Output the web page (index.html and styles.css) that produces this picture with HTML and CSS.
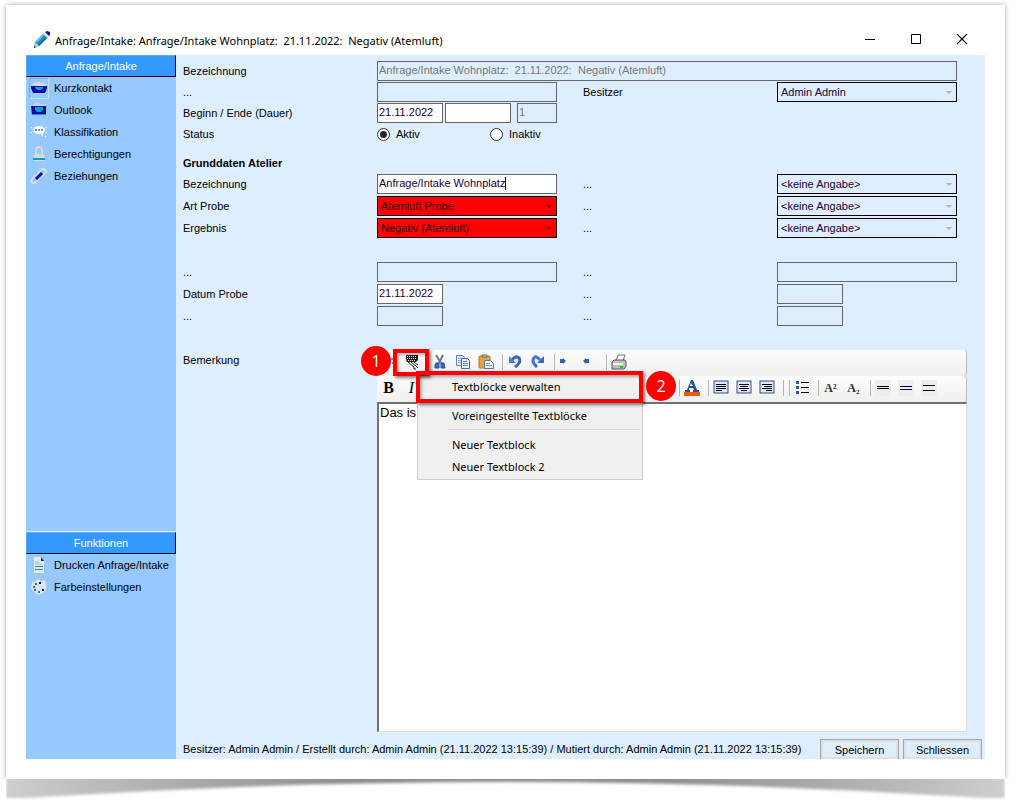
FILE: index.html
```html
<!DOCTYPE html>
<html lang="de">
<head>
    <meta charset="UTF-8">
    <meta name="viewport" content="width=device-width, initial-scale=1.0">
    <title>Anfrage/Intake</title>
    <link rel="stylesheet" href="styles.css">
</head>
<body>

    <div class="window">
        <header class="titlebar">
            <svg class="title-icon" width="18" height="18" viewBox="0 0 18 18">
                <path d="M2 11 L11 2 L15 6 L6 15 L1 17 Z" fill="#1b8fc4"/>
                <path d="M3 10 L11 2 L12 3 L4 12 Z" fill="#5cc3e8"/>
                <path d="M5 14 L14 5 L15 6 L6 15 Z" fill="#0b6396"/>
                <path d="M10 3 L12 1 L16 5 L14 7 Z" fill="#d8e4ea"/>
                <path d="M12 1 L14 0 L17 1 L17 4 L16 5 Z" fill="#1414a0"/>
                <path d="M2 11 L6 15 L1 17 Z" fill="#b9cdd6"/>
                <path d="M1 15 L3 16 L1 17 Z" fill="#223"/>
            </svg>
            <h1>Anfrage/Intake: Anfrage/Intake Wohnplatz:&nbsp; 21.11.2022:&nbsp; Negativ (Atemluft)</h1>
            <div class="window-buttons">
                <button type="button" aria-label="Minimieren"><svg width="12" height="12" viewBox="0 0 12 12"><path d="M1 5.500H11" stroke="#000"/></svg></button>
                <button type="button" aria-label="Maximieren"><svg width="12" height="12" viewBox="0 0 12 12"><path d="M1.500 0.500H10.500V9.500H1.500Z" fill="none" stroke="#000"/></svg></button>
                <button type="button" aria-label="Fenster schliessen"><svg width="12" height="12" viewBox="0 0 12 12"><path d="M1 0L11 10M11 0L1 10" stroke="#000" stroke-width="1.200"/></svg></button>
            </div>
        </header>

        <div class="content">
            <aside class="sidebar">
                <nav class="group">
                    <h2>Anfrage/Intake</h2>
                    <a href="#" class="item active">
                        <span class="icon"><svg width="18" height="16" viewBox="0 0 18 16"><path d="M3 4L5 2H9L10 3H14L16 5V8H2V5Z" fill="#d5d9dc"/><path d="M1 6H17V8L15 13H3L1 8Z" fill="#0909a8"/><path d="M5 7H13V8L11 10H7L5 8Z" fill="#0b9bd0"/></svg></span>
                        Kurzkontakt
                    </a>
                    <a href="#" class="item">
                        <span class="icon"><svg width="18" height="16" viewBox="0 0 18 16"><path d="M3 3L5 1H9L10 2H14L16 4V7H2V4Z" fill="#c5d5e0"/><path d="M1 4H16V13H2Z" fill="#0909a8"/><path d="M5 5H13V8L11 10H7L5 8Z" fill="#0b9bd0"/><path d="M2 12H16V13H2Z" fill="#0b9bd0"/></svg></span>
                        Outlook
                    </a>
                    <a href="#" class="item">
                        <span class="icon"><svg width="18" height="16" viewBox="0 0 18 16"><ellipse cx="9" cy="6" rx="6" ry="4" fill="#fff"/><path d="M10 9L13 13V8Z" fill="#fff"/><path d="M5 5h2v2h-2zM8 5h2v2h-2zM11 5h2v2h-2z" fill="#69a0c4"/><path d="M1 3h1v1h-1zM1 8h1v1h-1zM16 3h1v1h-1zM16 8h1v1h-1zM15 12h1v1h-1z" fill="#fff"/></svg></span>
                        Klassifikation
                    </a>
                    <a href="#" class="item">
                        <span class="icon"><svg width="18" height="16" viewBox="0 0 18 16"><path d="M6 8V4Q6 1 9 1T12 4V8" fill="none" stroke="#d5d9dc" stroke-width="2"/><path d="M4 8H14L15 15H3Z" fill="#d5d9dc"/><path d="M3 12H15V14H3Z" fill="#0b9bc8"/></svg></span>
                        Berechtigungen
                    </a>
                    <a href="#" class="item">
                        <span class="icon"><svg width="18" height="16" viewBox="0 0 18 16"><g fill="none" stroke="#d8dde2" stroke-width="2"><rect x="8" y="2" width="8" height="5" rx="2" transform="rotate(-45 12 4.500)"/><rect x="1" y="9" width="8" height="5" rx="2" transform="rotate(-45 5 11.500)"/></g><path d="M6 11L12 5" stroke="#0909b8" stroke-width="3"/></svg></span>
                        Beziehungen
                    </a>
                </nav>
                <nav class="group functions">
                    <h2>Funktionen</h2>
                    <a href="#" class="item">
                        <span class="icon"><svg width="18" height="16" viewBox="0 0 18 16"><path d="M4 0H11L14 4V16H4Z" fill="#e8eaec"/><path d="M11 0L14 4H11Z" fill="#0909a8"/><path d="M5 5H9M5 7H12" stroke="#8ebbd8"/><path d="M5 9.500H13M5 12.500H13" stroke="#1690bd"/></svg></span>
                        Drucken Anfrage/Intake
                    </a>
                    <a href="#" class="item">
                        <span class="icon"><svg width="18" height="16" viewBox="0 0 18 16"><path d="M5 2L9 0L11 3L13 1L16 3V11L13 14L8 16L4 13L1 9L2 4Z" fill="#dfe5ea"/><path d="M5 4h2v2h-2zM3 7h2v2h-2zM4 10h2v2h-2zM8 12h2v2h-2z" fill="#107fae"/><path d="M9 3h2v2h-2zM12 10h2v2h-2z" fill="#0909a8"/></svg></span>
                        Farbeinstellungen
                    </a>
                </nav>
            </aside>

            <main class="main">
                <form class="form">
                    <div class="fields head-fields">
                        <label for="title">Bezeichnung</label>
                        <input class="wide" type="text" id="title" value="Anfrage/Intake Wohnplatz:  21.11.2022:  Negativ (Atemluft)" disabled>

                        <label for="extra">...</label>
                        <input type="text" id="extra" disabled>
                        <label class="second" for="owner">Besitzer</label>
                        <div class="select"><select id="owner"><option>Admin Admin</option></select></div>

                        <label for="begin">Beginn / Ende (Dauer)</label>
                        <div class="dates">
                            <input type="text" id="begin" value="21.11.2022">
                            <input type="text" aria-label="Ende">
                            <input class="duration" type="text" aria-label="Dauer" value="1" disabled>
                        </div>

                        <span class="row-start">Status</span>
                        <div class="radios">
                            <label><input type="radio" name="status" checked> Aktiv</label>
                            <label><input type="radio" name="status"> Inaktiv</label>
                        </div>
                    </div>

                    <h3>Grunddaten Atelier</h3>

                    <div class="fields base-fields">
                        <label for="name">Bezeichnung</label>
                        <div class="typing"><input type="text" id="name" value="Anfrage/Intake Wohnplatz"></div>
                        <label class="second" for="opt1">...</label>
                        <div class="select"><select id="opt1"><option>&lt;keine Angabe&gt;</option></select></div>

                        <label for="kind">Art Probe</label>
                        <div class="select required"><select id="kind"><option>Atemluft Probe</option></select></div>
                        <label class="second" for="opt2">...</label>
                        <div class="select"><select id="opt2"><option>&lt;keine Angabe&gt;</option></select></div>

                        <label for="result">Ergebnis</label>
                        <div class="select required"><select id="result"><option>Negativ (Atemluft)</option></select></div>
                        <label class="second" for="opt3">...</label>
                        <div class="select"><select id="opt3"><option>&lt;keine Angabe&gt;</option></select></div>

                        <div class="spacer"></div>

                        <label for="free1">...</label>
                        <input type="text" id="free1" disabled>
                        <label class="second" for="free2">...</label>
                        <input type="text" id="free2" disabled>

                        <label for="date">Datum Probe</label>
                        <input class="short" type="text" id="date" value="21.11.2022">
                        <label class="second" for="free3">...</label>
                        <input class="short" type="text" id="free3" disabled>

                        <label for="free4">...</label>
                        <input class="short" type="text" id="free4" disabled>
                        <label class="second" for="free5">...</label>
                        <input class="short" type="text" id="free5" disabled>
                    </div>

                    <div class="remark">
                        <label for="remark">Bemerkung</label>
                        <div class="editor">
                            <div class="toolbar toolbar-top">
                                <button type="button" aria-label="Einfügen"><svg width="16" height="16" viewBox="0 0 16 16"><path d="M10 5H13M11 9H13" stroke="#222"/></svg></button>
                                <button type="button" aria-label="Textblöcke"><svg width="16" height="16" viewBox="0 0 16 16"><path d="M2 1H14V6L12 8H3L2 6Z" fill="#222"/><path d="M3 2.500H13M3 4.500H13M4 6.500H12" stroke="#f2f0b0" stroke-dasharray="1 1"/><path d="M4 8L10 13M7 8L12 12M10 8L14 11M10 13V15H12M12 12L14 14" stroke="#222" fill="none"/></svg></button>
                                <span class="sep hidden"></span>
                                <button type="button" aria-label="Ausschneiden"><svg width="16" height="16" viewBox="0 0 16 16"><path d="M4 1L9 9M11 1L7 9" stroke="#68788c" stroke-width="2"/><path d="M4 9H7V14H3V11ZM9 9H12L13 14H9Z" fill="#3e69bd" stroke="#2c4c94"/></svg></button>
                                <button type="button" aria-label="Kopieren"><svg width="16" height="16" viewBox="0 0 16 16"><path d="M1.500 1.500H7.500L9.500 3.500V11.500H1.500Z" fill="#eaf2ff" stroke="#5a82c8"/><path d="M3 4.500H7M3 6.500H7M3 8.500H7" stroke="#7da2dd"/><path d="M6.500 4.500H12.500L14.500 6.500V14.500H6.500Z" fill="#eaf2ff" stroke="#4069b5"/><path d="M8 7.500H12M8 9.500H13M8 11.500H13" stroke="#5a82c8"/></svg></button>
                                <button type="button" aria-label="Einsetzen"><svg width="16" height="16" viewBox="0 0 16 16"><rect x="1" y="2" width="11" height="12" rx="1" fill="#e2a53c" stroke="#a87722"/><path d="M4 3V1H9V3Z" fill="#ddd" stroke="#665"/><path d="M6.500 6.500H12.500L15.500 9.500V14.500H6.500Z" fill="#eef4ff" stroke="#5876a8"/><path d="M8 9.500H12M8 11.500H14" stroke="#7899cc"/></svg></button>
                                <span class="sep"></span>
                                <button type="button" aria-label="Rückgängig"><svg width="16" height="16" viewBox="0 0 16 16"><path d="M5 6Q9 1 12 4Q15 8 8 13" fill="none" stroke="#3565bd" stroke-width="3"/><path d="M2 2V9H9Z" fill="#4c82d8"/></svg></button>
                                <button type="button" aria-label="Wiederholen"><svg width="16" height="16" viewBox="0 0 16 16"><path d="M10 6Q6 1 4 4Q1 8 7 13" fill="none" stroke="#3f76d0" stroke-width="3"/><path d="M14 2V9H7Z" fill="#3569c4"/></svg></button>
                                <span class="sep"></span>
                                <button type="button" aria-label="Einzug vergrössern"><svg width="16" height="16" viewBox="0 0 16 16"><path d="M1 5H4V4L7 7L4 10V9H1Z" fill="#2c62ba"/></svg></button>
                                <button type="button" aria-label="Einzug verkleinern"><svg width="16" height="16" viewBox="0 0 16 16"><path d="M7 5H4V4L1 7L4 10V9H7Z" fill="#2c62ba"/></svg></button>
                                <span class="sep"></span>
                                <button type="button" aria-label="Drucken"><svg width="16" height="16" viewBox="0 0 16 16"><path d="M5 7L7 1H14L12 7Z" fill="#fff" stroke="#777"/><path d="M1 8L3 6H14L15 8V12L13 15H1Z" fill="#bbc0c3" stroke="#555"/><path d="M2 9H12V11H2Z" fill="#f4f4f4"/><path d="M9 12h3v2h-3z" fill="#22c322"/></svg></button>
                            </div>
                            <div class="toolbar">
                                <button class="serif bold" type="button">B</button>
                                <button class="serif italic" type="button">I</button>
                                <span class="covered"></span>
                                <span class="sep"></span>
                                <button type="button" aria-label="Schriftfarbe"><svg width="16" height="16" viewBox="0 0 16 16"><path d="M7 0H9L13 10H15V12H9V10H10L9 8H5L5 10H6V12H1V10H3ZM7 3L6 6H9Z" fill="#2c4f94"/><path d="M0 12H16V16H0Z" fill="#ff5500"/></svg></button>
                                <span class="sep"></span>
                                <button type="button" aria-label="Linksbündig"><svg width="16" height="16" viewBox="0 0 16 16"><rect class="page" x="1" y="1" width="14" height="12"/><path d="M3 4.500H13M3 6.500H13M3 8.500H13M3 10.500H9" stroke="#000"/></svg></button>
                                <button type="button" aria-label="Zentriert"><svg width="16" height="16" viewBox="0 0 16 16"><rect class="page" x="1" y="1" width="14" height="12"/><path d="M3 4.500H13M4 6.500H12M3 8.500H13M5 10.500H11" stroke="#000"/></svg></button>
                                <button type="button" aria-label="Rechtsbündig"><svg width="16" height="16" viewBox="0 0 16 16"><rect class="page" x="1" y="1" width="14" height="12"/><path d="M3 4.500H13M5 6.500H13M3 8.500H13M7 10.500H13" stroke="#000"/></svg></button>
                                <span class="sep"></span>
                                <span class="sep"></span>
                                <button type="button" aria-label="Aufzählung"><svg width="16" height="16" viewBox="0 0 16 16"><path d="M2 1h3v3h-3zM2 6h3v3h-3zM2 11h3v3h-3z" fill="#3455a0"/><path d="M7 2.500H15M7 7.500H15M7 12.500H15" stroke="#000"/></svg></button>
                                <span class="sep"></span>
                                <button class="serif script" type="button">A²</button>
                                <button class="serif script" type="button">A₂</button>
                                <span class="sep"></span>
                                <button type="button" aria-label="Zeilenabstand klein"><svg width="16" height="16" viewBox="0 0 16 16"><rect width="16" height="16" fill="#eee"/><path d="M2 6.500H14M2 8.500H14" stroke="#000"/></svg></button>
                                <button type="button" aria-label="Zeilenabstand mittel"><svg width="16" height="16" viewBox="0 0 16 16"><rect width="16" height="16" fill="#eee"/><path d="M2 6.500H14" stroke="#000"/><path d="M2 9.500H14" stroke="#000080"/></svg></button>
                                <button type="button" aria-label="Zeilenabstand gross"><svg width="16" height="16" viewBox="0 0 16 16"><rect width="16" height="16" fill="#eee"/><path d="M2 5.500H14M2 10.500H14" stroke="#000"/></svg></button>
                            </div>
                            <textarea id="remark">Das is</textarea>

                            <div class="menu">
                                <button type="button">Textblöcke verwalten</button>
                                <hr>
                                <button type="button">Voreingestellte Textblöcke</button>
                                <hr>
                                <button type="button">Neuer Textblock</button>
                                <button type="button">Neuer Textblock 2</button>
                            </div>
                            <div class="mark mark-tool"></div>
                            <div class="mark mark-menu"></div>
                            <span class="step step-one">1</span>
                            <span class="step step-two">2</span>
                        </div>
                    </div>

                    <footer class="footer">
                        <span>Besitzer: Admin Admin / Erstellt durch: Admin Admin (21.11.2022 13:15:39) / Mutiert durch: Admin Admin (21.11.2022 13:15:39)</span>
                        <div class="actions">
                            <button type="button">Speichern</button>
                            <button type="button">Schliessen</button>
                        </div>
                    </footer>
                </form>
            </main>
        </div>
    </div>

    <svg class="page-shadow" viewBox="0 0 1000 24" preserveAspectRatio="none">
        <defs>
            <linearGradient id="shade">
                <stop offset="0" stop-color="#cfcfcf"/>
                <stop offset="0.080" stop-color="#bdbdbd"/>
                <stop offset="0.350" stop-color="#8c8c8c"/>
                <stop offset="0.650" stop-color="#8c8c8c"/>
                <stop offset="0.920" stop-color="#bdbdbd"/>
                <stop offset="1" stop-color="#cfcfcf"/>
            </linearGradient>
            <filter id="soft" x="-5%" y="-50%" width="110%" height="200%"><feGaussianBlur stdDeviation="1.500"/></filter>
        </defs>
        <path d="M0 -6H1000V19H980Q740 3 500 3T20 19H0Z" fill="url(#shade)" filter="url(#soft)"/>
    </svg>

</body>
</html>
```
FILE: styles.css
```css
* {
    margin: 0;
    padding: 0;
    box-sizing: border-box;
}

body {
    font-family: 'Liberation Sans', Arial, sans-serif;
    font-size: 11px;
    color: #000;
    background: #fff;
    display: flex;
    flex-direction: column;
    min-height: 100vh;
    padding: 5px 14px 5px 6px;
}

button, input, select, textarea {
    font: inherit;
    color: inherit;
    border-radius: 0;
    outline: none;
}

button {
    background: none;
    border: none;
}

.window {
    position: relative;
    z-index: 1;
    flex: 1;
    display: flex;
    flex-direction: column;
    padding: 20px;
    background: #fff;
    box-shadow: 0 0 5px rgba(0, 0, 0, 0.35);
    clip-path: inset(-5px -5px 0 -5px);
}

.page-shadow {
    display: block;
    width: 100%;
    height: 24px;
}

/* Title bar */

.titlebar {
    display: flex;
    align-items: center;
    height: 30px;
    padding-left: 7px;
}

.titlebar h1 {
    flex: 1;
    margin-left: 4px;
    font-family: 'Noto Sans', 'Open Sans', sans-serif;
    font-size: 11px;
    font-weight: 400;
}

.window-buttons {
    display: flex;
}

.window-buttons button {
    display: flex;
    align-items: center;
    justify-content: center;
    width: 46px;
    height: 30px;
}

/* Sidebar */

.content {
    flex: 1;
    display: flex;
    background: #deeeff;
}

.sidebar {
    width: 150px;
    display: flex;
    flex-direction: column;
    justify-content: space-between;
    background: #95c9ff;
}

.functions {
    min-height: 228px;
    border-top: 1px solid #deeeff;
}

.group h2 {
    height: 22px;
    border: 1px solid #5cabff;
    border-right-color: #000;
    border-bottom-color: #000;
    background: #3399ff;
    color: #fff;
    font-size: 11px;
    font-weight: 400;
    line-height: 20px;
    text-align: center;
}

.item {
    display: flex;
    align-items: center;
    gap: 5px;
    height: 22px;
    padding-left: 3px;
    color: #000;
    text-decoration: none;
    white-space: nowrap;
}

.icon {
    display: flex;
    align-items: center;
    justify-content: center;
    width: 20px;
    height: 21px;
}

.active .icon {
    border: 1px solid #c5e1ff;
    border-top-color: #6aaeee;
    border-left-color: #6aaeee;
}

/* Form */

.main {
    flex: 1;
    display: flex;
    min-width: 0;
    padding: 6px 3px 0 7px;
}

.form {
    flex: 1;
    display: flex;
    flex-direction: column;
    min-width: 0;
}

.fields {
    display: grid;
    grid-template-columns: 194px minmax(0, 1fr) 220px minmax(0, 1fr);
    grid-auto-rows: 20px;
    align-items: center;
    margin-right: 25px;
}

.head-fields {
    row-gap: 1px;
}

.base-fields {
    row-gap: 2px;
}

.fields > label,
.row-start {
    grid-column: 1;
}

.fields > .second {
    grid-column: 3;
    padding-left: 26px;
}

.fields .wide {
    grid-column: 2 / 5;
}

.spacer {
    grid-column: 1 / 5;
}

h3 {
    margin: 10px 0 2px;
    font-size: 11px;
    line-height: 18px;
}

input[type="text"] {
    width: 100%;
    height: 20px;
    min-width: 0;
    padding: 0 1px 2px;
    border: 1px solid #666;
    background: #fff;
    color: #1d0038;
    white-space: pre;
}

input[type="text"]:disabled {
    background: #deeeff;
    color: #777;
}

input[type="text"].short {
    width: 66px;
}

.dates {
    display: flex;
    gap: 2px;
}

.dates .duration {
    flex: 0 0 40px;
    margin-left: 4px;
}

.radios {
    display: flex;
}

.radios label {
    display: flex;
    flex: 0 0 113px;
    align-items: center;
    gap: 6px;
}

.radios input {
    appearance: none;
    width: 13px;
    height: 13px;
    border: 1px solid #333;
    border-radius: 50%;
    background: #fff;
}

.radios input:checked {
    background: radial-gradient(circle, #222 3px, #fff 4px);
}

.select,
.typing {
    position: relative;
}

.select select {
    display: block;
    appearance: none;
    width: 100%;
    height: 20px;
    padding: 0 3px;
    border: 1px solid #000;
    background: #deeeff;
    color: #1d0038;
}

.select::after {
    content: "";
    position: absolute;
    top: 9px;
    right: 5px;
    border: 3px solid transparent;
    border-top-color: #a5b5c2;
    border-bottom: none;
}

.select.required select {
    background: #ff0000;
    color: #300;
}

.select.required::after {
    border-top-color: #900;
}

/* text cursor after the typed name */
.typing::after {
    content: "";
    position: absolute;
    top: 3px;
    left: 128px;
    width: 1px;
    height: 13px;
    background: #000;
}

/* Editor */

.remark {
    flex: 1;
    display: grid;
    grid-template-columns: 194px minmax(0, 1fr);
    margin: 24px 15px 0 0;
}

.remark > label {
    line-height: 20px;
}

.editor {
    position: relative;
    display: flex;
    flex-direction: column;
}

.toolbar {
    display: flex;
    align-items: center;
    height: 26px;
    padding-bottom: 2px;
    border-right: 1px solid #bbb;
    border-radius: 0 3px 3px 0;
    background: linear-gradient(#fdfdfd, #efefef);
}

.toolbar button {
    display: flex;
    align-items: center;
    justify-content: center;
    width: 23px;
    height: 22px;
}

.sep {
    width: 6px;
    height: 16px;
    border-right: 1px solid #b5b5b5;
}

.sep.hidden {
    width: 5px;
    border-color: transparent;
}

.covered {
    width: 251px;
}

.toolbar .serif {
    font-family: 'Liberation Serif', serif;
    font-size: 16px;
}

.toolbar .bold {
    font-weight: 700;
}

.toolbar .italic {
    font-style: italic;
}

.toolbar .script {
    font-size: 12px;
    font-weight: 700;
    color: #333;
}

.page {
    fill: #dbe6f8;
    stroke: #334d78;
}

.editor textarea {
    flex: 1;
    padding: 1px;
    resize: none;
    border: 2px solid #ddd;
    border-top-color: #707070;
    border-left-color: #707070;
    border-right-width: 1px;
    border-bottom-width: 1px;
    background: #fff;
    font-size: 13px;
}

.menu {
    position: absolute;
    top: 22px;
    left: 40px;
    width: 226px;
    padding: 2px;
    border: 1px solid #ccc;
    background: #f0f0f0;
}

.menu button {
    display: block;
    width: 100%;
    height: 22px;
    padding-left: 32px;
    font-family: 'Noto Sans', 'Open Sans', sans-serif;
    font-size: 11px;
    text-align: left;
}

.menu hr {
    margin: 3px 0 3px 28px;
    border: none;
    border-top: 1px solid #d5d5d5;
}

/* Step markers */

.mark {
    position: absolute;
    border: 4px solid #ff0000;
    box-shadow: 2px 2px 3px rgba(0, 0, 0, 0.5), inset 2px 2px 3px rgba(0, 0, 0, 0.3);
}

.mark-tool {
    top: -1px;
    left: 16px;
    width: 36px;
    height: 27px;
}

.mark-menu {
    top: 21px;
    left: 39px;
    width: 227px;
    height: 32px;
}

.step {
    position: absolute;
    width: 30px;
    height: 30px;
    border-radius: 50%;
    background: #ff0000;
    color: #fff;
    font-family: 'Open Sans', sans-serif;
    font-size: 16px;
    line-height: 30px;
    text-align: center;
}

.step-one {
    top: -4px;
    left: -16px;
}

.step-two {
    top: 21px;
    left: 269px;
}

/* Footer */

.footer {
    display: flex;
    justify-content: space-between;
    align-items: center;
    height: 20px;
    margin-top: 7px;
}

.actions {
    display: flex;
    gap: 4px;
}

.actions button {
    width: 79px;
    height: 20px;
    border: 1px solid #a5a5a5;
    border-bottom: none;
    box-shadow: inset 0 0 0 2px #dfdfdf;
}
```
